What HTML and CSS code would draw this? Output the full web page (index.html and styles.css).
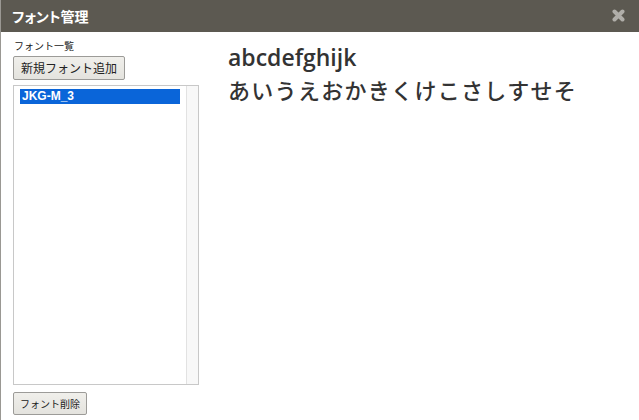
FILE: index.html
```html
<!DOCTYPE html>
<html lang="ja">
<head>
<meta charset="utf-8">
<title>フォント管理</title>
<link rel="stylesheet" href="styles.css">
</head>
<body>
<div class="dialog">
  <div class="titlebar">
    <span class="title">フォント管理</span>
    <svg class="close" width="13" height="13" viewBox="0 0 13 13"><path d="M2.5 2.5 L10.5 10.5 M10.5 2.5 L2.5 10.5" stroke="#b0aea9" stroke-width="4" stroke-linecap="round"/></svg>
  </div>
  <div class="content">
    <div class="side">
      <div class="label">フォント一覧</div>
      <button class="btn">新規フォント追加</button>
      <div class="list">
        <div class="items">
          <div class="item selected">JKG-M_3</div>
        </div>
        <div class="scroll"></div>
      </div>
      <button class="btn small">フォント削除</button>
    </div>
    <div class="preview">
      <div class="latin">abcdefghijk</div>
      <div class="kana">あいうえおかきくけこさしすせそ</div>
    </div>
  </div>
</div>
</body>
</html>
```
FILE: styles.css
```css
html, body { margin: 0; padding: 0; background: #fff; }
body { font-family: "Liberation Sans", "Noto Sans CJK JP", sans-serif; width: 639px; height: 420px; overflow: hidden; }
.dialog { height: 420px; border-left: 1px solid #9a9893; box-sizing: border-box; }
.titlebar { height: 32px; background: #5c5951; display: flex; align-items: center; justify-content: space-between; padding: 0 14px 0 11px; box-sizing: border-box; }
.title { color: #fff; font-family: "Noto Sans CJK JP", sans-serif; font-weight: 700; font-size: 14px; line-height: 32px; font-feature-settings: "palt"; }
.close { display: block; margin-top: -1px; }
.content { display: flex; }
.side { width: 186px; padding-left: 12px; padding-top: 8px; display: flex; flex-direction: column; align-items: flex-start; }
.label { font-family: "Noto Sans CJK JP", sans-serif; font-size: 10px; line-height: 12px; color: #222; margin-left: 1px; }
.btn { font-family: "Noto Sans CJK JP", sans-serif; font-size: 12px; color: #222; background: linear-gradient(#f0efeb, #e4e3de); border: 1px solid #9c9b98; border-radius: 2px; padding: 0 7px; height: 24px; margin: 4px 0 0; line-height: 22px; }
.btn.small { font-size: 10px; height: 23px; margin-top: 7px; padding: 0 6px; }
.list { width: 186px; height: 300px; border: 1px solid #c8c8c8; box-sizing: border-box; margin-top: 5px; display: flex; }
.items { flex: 1; padding: 3px 6px; }
.item { height: 15px; line-height: 15px; font-size: 12px; font-weight: 700; padding-left: 2px; color: #000; }
.item.selected { background: #0a65d9; color: #fff; }
.scroll { width: 11px; border-left: 1px solid #e2e2e2; background: #f8f8f8; }
.preview { padding-left: 29px; padding-top: 9px; color: #333; font-family: "Noto Sans CJK JP", sans-serif; font-weight: 500; }
.latin { font-family: "Open Sans", "Noto Sans", sans-serif; font-size: 23px; line-height: 32px; font-weight: 600; }
.kana { font-size: 22px; line-height: 32px; letter-spacing: 1.3px; }
```
